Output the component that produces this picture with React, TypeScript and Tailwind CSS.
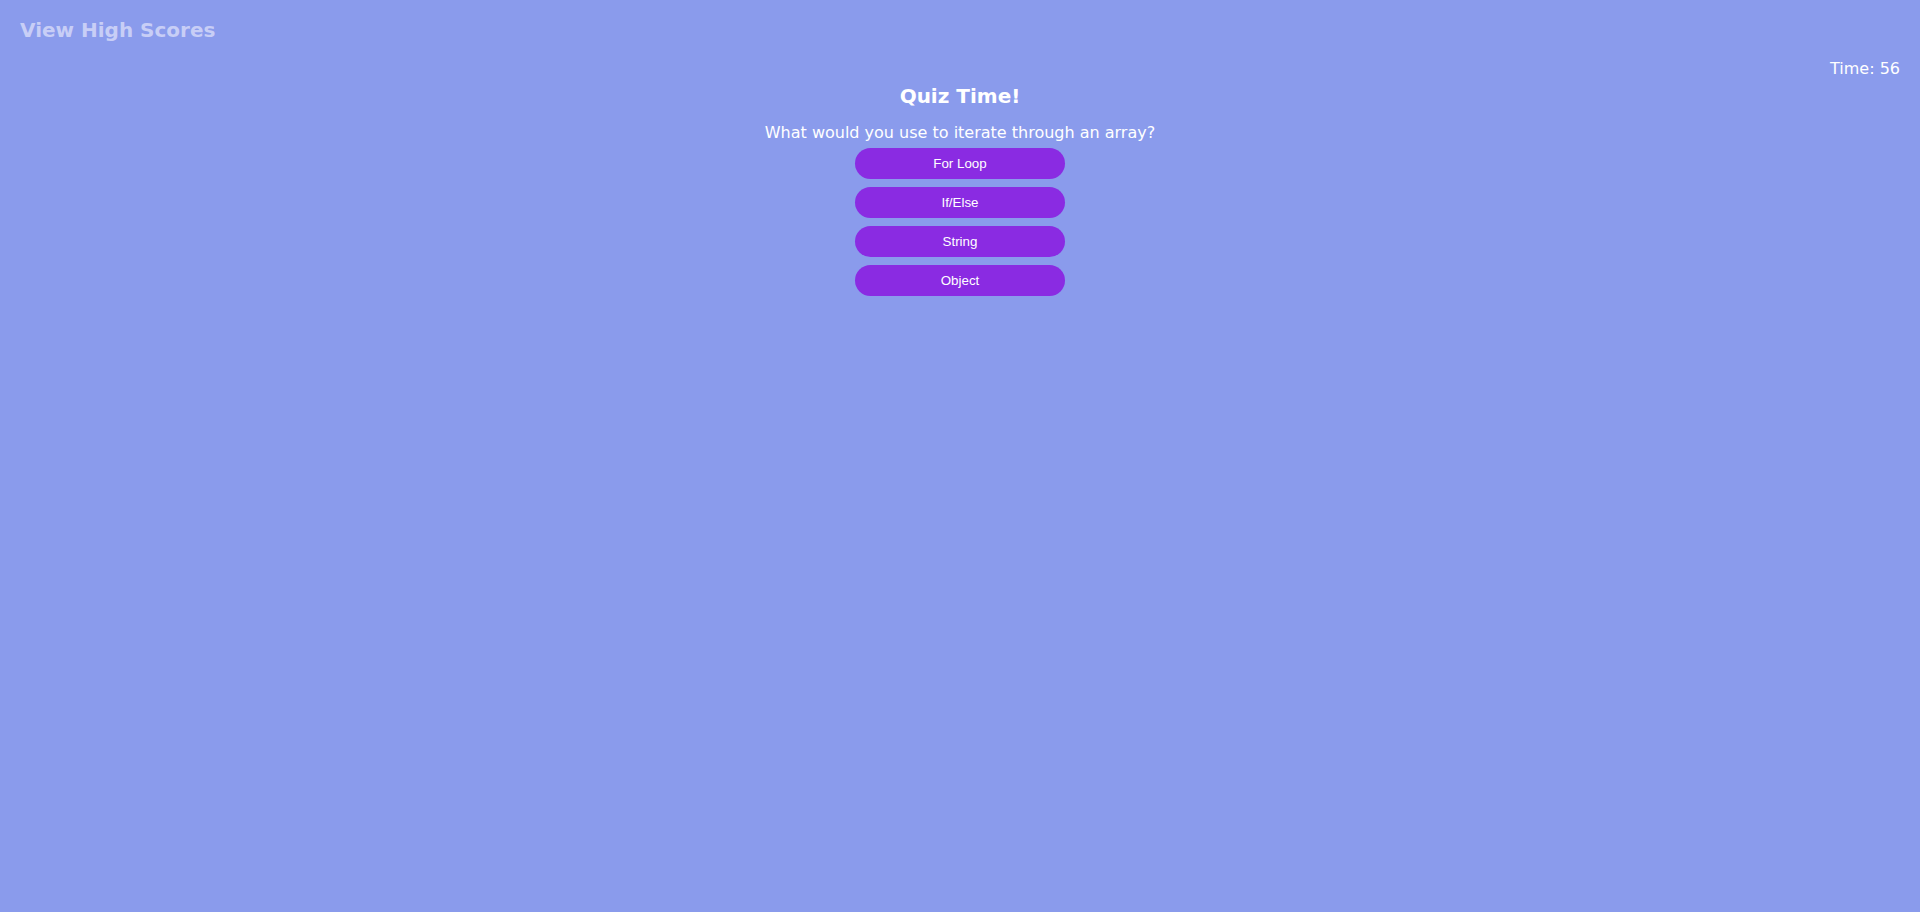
import React from "react";

export default function App() {
  const answers = ["For Loop", "If/Else", "String", "Object"];
  return (
    <div className="min-h-screen w-full bg-[#8a9bec] font-['DejaVu_Sans',Verdana,sans-serif] text-white">
      <div className="px-5 pt-[16px]">
        <a className="text-[20px] font-bold leading-[28px] text-[#c8cef6] cursor-pointer">View High Scores</a>
      </div>
      <div className="flex justify-end pr-5 pt-[15px] text-[16px] leading-[20px]">Time: 56</div>
      <div className="flex flex-col items-center">
        <h1 className="mt-[3px] text-[20px] font-bold leading-[28px]">Quiz Time!</h1>
        <p className="mt-[13px] text-[16px] leading-[20px]">What would you use to iterate through an array?</p>
        <div className="mt-[5px] flex flex-col gap-[8px]">
          {answers.map((a) => (
            <button
              key={a}
              className="h-[31px] w-[210px] rounded-full bg-[#8a2be2] font-['Liberation_Sans',Arial,sans-serif] text-[13.33px] text-white"
            >
              {a}
            </button>
          ))}
        </div>
      </div>
    </div>
  );
}
